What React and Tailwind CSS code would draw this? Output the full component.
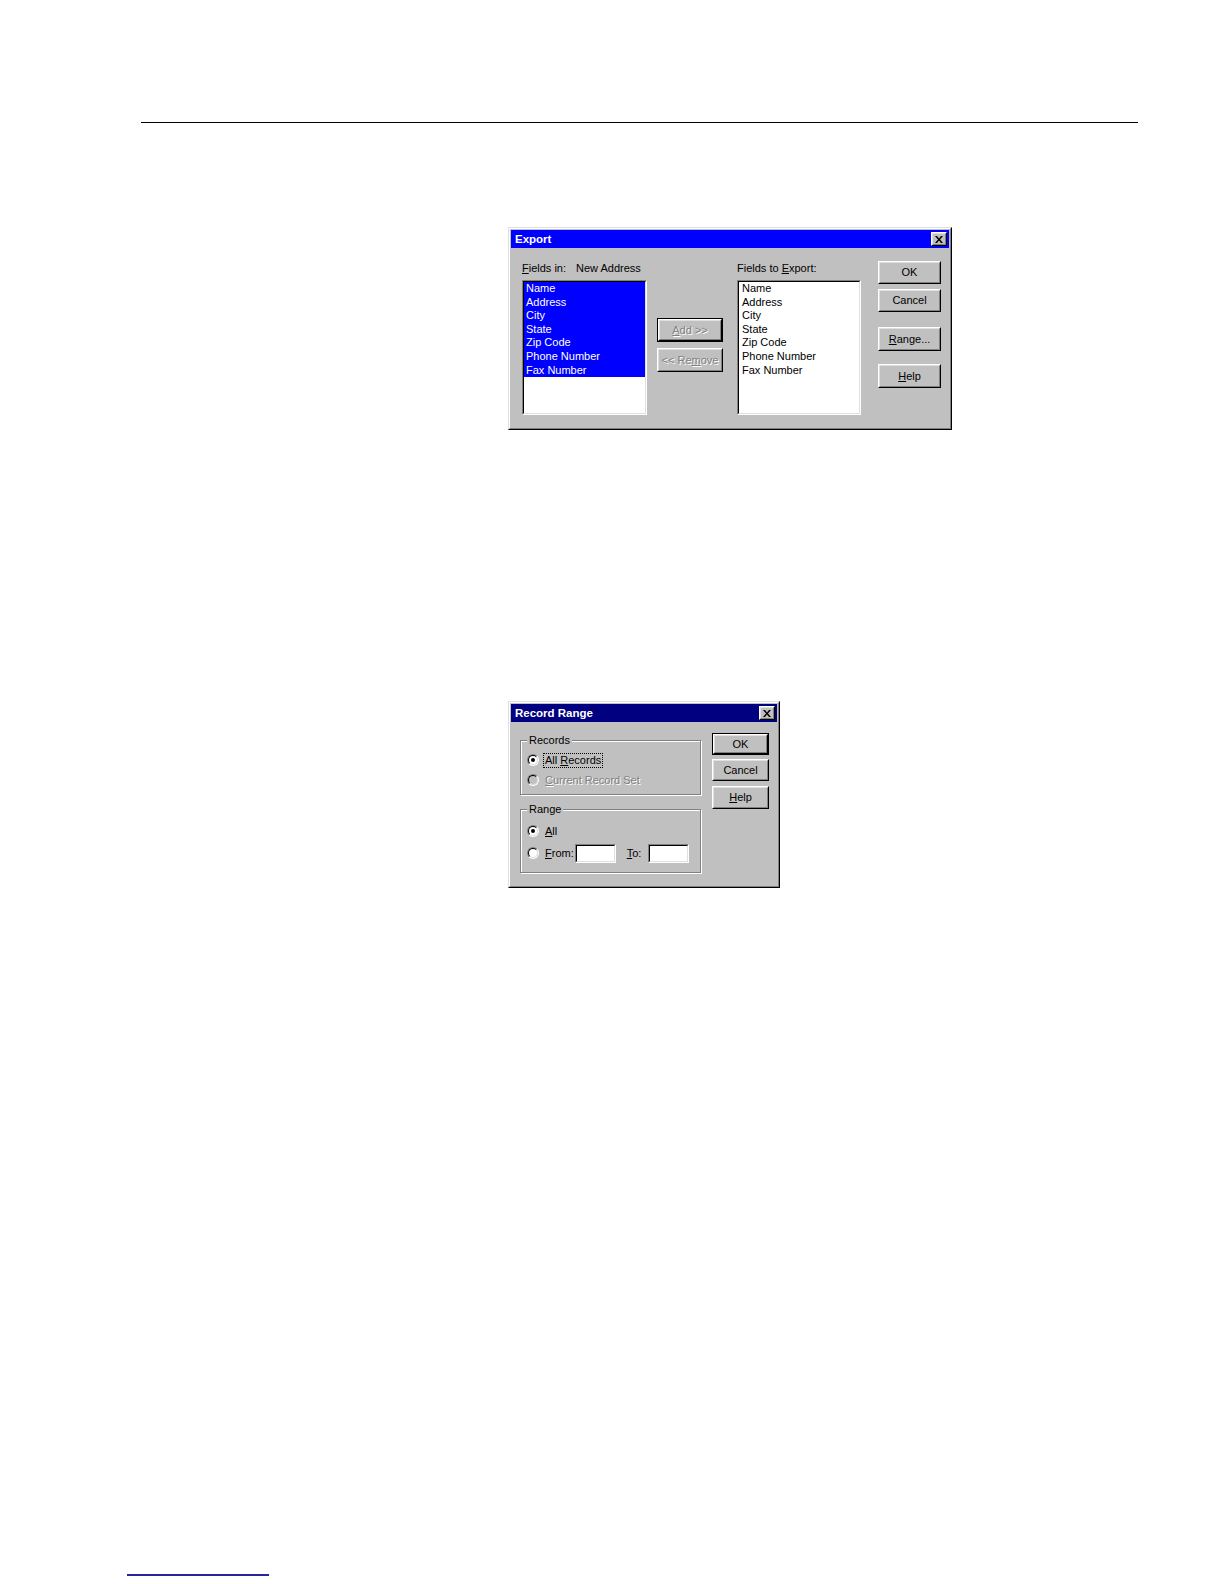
import React from "react";

export default function App() {
  return (
    <div className="w-[1224px] h-[1584px] bg-white flex flex-col items-start font-['Liberation_Sans',Arial,sans-serif] text-black">
      {/* header rule */}
      <div className="mt-[122px] ml-[141px] w-[997px] h-px bg-black" />

      <ExportDialog />
      <RecordRangeDialog />

      {/* footer link line */}
      <div className="mt-[686px] ml-[127px] w-[142px] h-[2px] bg-[#26269c]" />
    </div>
  );
}

/* ==== dialogs ==== */
function ExportDialog() {
  const fields = ["Name", "Address", "City", "State", "Zip Code", "Phone Number", "Fax Number"];

  return (
    <Window className="ml-[508px] mt-[104px] w-[444px] h-[203px]" title="Export" titleBg="bg-[#0000ff]">
      <div className="flex items-start pl-[12px]">
        {/* source list */}
        <div className="w-[125px] pt-[13px]">
          <div className="h-[19px] text-[11px] leading-[14px] whitespace-nowrap">
            <span className="inline-block w-[54px]">
              <u>F</u>ields in:
            </span>
            New Address
          </div>
          <ListBox className="h-[135px]">
            <div className="bg-[#0000ff] text-white">
              {fields.map((f) => (
                <div key={f} className="pl-[2px] text-[11px] leading-[13.6px] whitespace-nowrap">
                  {f}
                </div>
              ))}
            </div>
          </ListBox>
        </div>

        {/* add / remove */}
        <div className="ml-[10px] w-[66px] pt-[70px] flex flex-col">
          <Button className="h-[24px]" isDefault disabled>
            <u>A</u>dd &gt;&gt;
          </Button>
          <Button className="h-[24px] mt-[6px]" disabled>
            &lt;&lt; Re<u>m</u>ove
          </Button>
        </div>

        {/* target list */}
        <div className="ml-[14px] w-[124px] pt-[13px]">
          <div className="h-[19px] text-[11px] leading-[14px] whitespace-nowrap">
            Fields to <u>E</u>xport:
          </div>
          <ListBox className="h-[135px]">
            {fields.map((f) => (
              <div key={f} className="pl-[3px] text-[11px] leading-[13.6px] whitespace-nowrap">
                {f}
              </div>
            ))}
          </ListBox>
        </div>

        {/* actions */}
        <div className="ml-[17px] w-[63px] pt-[13px] flex flex-col">
          <Button className="h-[23px]">OK</Button>
          <Button className="h-[23px] mt-[5px]">Cancel</Button>
          <Button className="h-[24px] mt-[15px]">
            <u>R</u>ange...
          </Button>
          <Button className="h-[24px] mt-[13px]">
            <u>H</u>elp
          </Button>
        </div>
      </div>
    </Window>
  );
}

function RecordRangeDialog() {
  return (
    <Window className="ml-[508px] mt-[271px] w-[272px] h-[187px]" title="Record Range" titleBg="bg-[#000080]">
      <div className="flex items-start pl-[10px]">
        <div className="w-[181px]">
          {/* Records */}
          <div className="mt-[18px] h-[55px] border border-[#808080] shadow-[inset_1px_1px_0_#fff,1px_1px_0_#fff]">
            <span className="block w-fit -mt-[8px] ml-[6px] px-[2px] bg-[#c0c0c0] text-[11px] leading-[14px]">
              Records
            </span>
            <div className="mt-[3px] h-[20px] flex items-center pl-[6px]">
              <Radio checked />
              <span className="ml-[5px] px-px text-[11px] leading-[13px] outline outline-1 outline-dotted outline-black">
                All <u>R</u>ecords
              </span>
            </div>
            <div className="h-[20px] flex items-center pl-[6px]">
              <Radio disabled />
              <span className="ml-[6px] text-[11px] leading-[13px] text-[#808080] [text-shadow:1px_1px_0_#fff]">
                <u>C</u>urrent Record Set
              </span>
            </div>
          </div>

          {/* Range */}
          <div className="mt-[14px] h-[64px] border border-[#808080] shadow-[inset_1px_1px_0_#fff,1px_1px_0_#fff]">
            <span className="block w-fit -mt-[8px] ml-[6px] px-[2px] bg-[#c0c0c0] text-[11px] leading-[14px]">
              Range
            </span>
            <div className="mt-[4px] h-[22px] flex items-center pl-[6px]">
              <Radio checked />
              <span className="ml-[6px] text-[11px] leading-[13px]">
                <u>A</u>ll
              </span>
            </div>
            <div className="h-[22px] flex items-center pl-[6px]">
              <Radio />
              <span className="ml-[6px] text-[11px] leading-[13px]">
                <u>F</u>rom:
              </span>
              <TextBox className="ml-[1px]" />
              <span className="ml-[11px] text-[11px] leading-[13px]">
                <u>T</u>o:
              </span>
              <TextBox className="ml-[7px]" />
            </div>
          </div>
        </div>

        <div className="ml-[11px] w-[57px] pt-[11px] flex flex-col">
          <Button className="h-[22px]" isDefault>
            OK
          </Button>
          <Button className="h-[22px] mt-[4px]">Cancel</Button>
          <Button className="h-[23px] mt-[5px]">
            <u>H</u>elp
          </Button>
        </div>
      </div>
    </Window>
  );
}

/* ==== win95 bits ==== */
function Window({ className, title, titleBg, children }) {
  return (
    <div className={`${className} border border-t-[#dfdfdf] border-l-[#dfdfdf] border-r-black border-b-black`}>
      <div className="h-full flex flex-col bg-[#c0c0c0] border border-t-white border-l-white border-r-[#808080] border-b-[#808080]">
        <div className={`${titleBg} mx-px mt-px h-[18px] flex items-center justify-between pl-[4px] pr-[2px]`}>
          <span className="text-white font-bold text-[11.5px] leading-[14px]">{title}</span>
          <CloseButton />
        </div>
        {children}
      </div>
    </div>
  );
}

function CloseButton() {
  return (
    <div className="w-[16px] h-[14px] flex border border-t-white border-l-white border-r-black border-b-black">
      <div className="flex-1 flex items-center justify-center bg-[#c0c0c0] border border-t-[#dfdfdf] border-l-[#dfdfdf] border-r-[#808080] border-b-[#808080]">
        <svg width="8" height="7" viewBox="0 0 8 7">
          <path d="M0 0h2l2 2.4L6 0h2L5 3.5 8 7H6L4 4.6 2 7H0l3-3.5z" fill="#000" />
        </svg>
      </div>
    </div>
  );
}

function Button({ className = "", isDefault, disabled, children }) {
  return (
    <div className={`${className} flex ${isDefault ? "border border-black" : ""}`}>
      <div className="flex-1 flex border border-t-white border-l-white border-r-black border-b-black">
        <div
          className={`flex-1 flex items-center justify-center whitespace-nowrap text-[11px] leading-[13px] border border-t-[#dfdfdf] border-l-[#dfdfdf] border-r-[#808080] border-b-[#808080] ${
            disabled ? "text-[#808080] [text-shadow:1px_1px_0_#fff]" : "text-black"
          }`}
        >
          {children}
        </div>
      </div>
    </div>
  );
}

function ListBox({ className = "", children }) {
  return (
    <div className={`${className} flex border border-t-[#808080] border-l-[#808080] border-r-white border-b-white`}>
      <div className="flex-1 bg-white overflow-hidden border border-t-black border-l-black border-r-[#dfdfdf] border-b-[#dfdfdf]">
        {children}
      </div>
    </div>
  );
}

function TextBox({ className = "" }) {
  return (
    <div className={`${className} w-[41px] h-[19px] flex border border-t-[#808080] border-l-[#808080] border-r-white border-b-white`}>
      <div className="flex-1 bg-white border border-t-black border-l-black border-r-[#dfdfdf] border-b-[#dfdfdf]" />
    </div>
  );
}

function Radio({ checked, disabled }) {
  return (
    <span className="w-[12px] h-[12px] shrink-0 flex rounded-full border border-t-[#808080] border-l-[#808080] border-r-white border-b-white">
      <span
        className={`flex-1 flex items-center justify-center rounded-full border border-t-black border-l-black border-r-[#dfdfdf] border-b-[#dfdfdf] ${
          disabled ? "bg-[#c0c0c0]" : "bg-white"
        }`}
      >
        {checked && <span className="w-[4px] h-[4px] rounded-full bg-black" />}
      </span>
    </span>
  );
}
